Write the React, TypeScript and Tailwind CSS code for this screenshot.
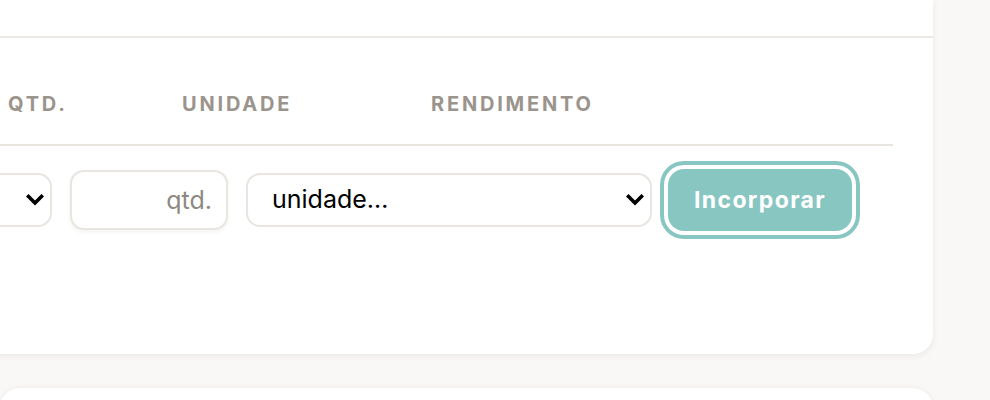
function Chevron() {
  return (
    <svg
      viewBox="0 0 18 12"
      className="pointer-events-none absolute right-[8px] top-1/2 h-[12px] w-[18px] -translate-y-1/2"
      fill="none"
      stroke="black"
      strokeWidth="3.6"
      strokeLinecap="square"
    >
      <path d="M2.5 2.5 9 9l6.5-6.5" />
    </svg>
  );
}

export default function App() {
  return (
    <div className="h-[400px] w-[990px] overflow-hidden bg-[#f9f8f6] pr-[57px] font-['Inter','Liberation_Sans',sans-serif]">
      <div className="-ml-[300px] rounded-b-[20px] bg-white shadow-[0_2px_6px_rgba(60,50,40,0.08)]">
        <div className="h-[38px] border-b-2 border-[#ebe7e2]" />
        <div className="pl-[40px] pr-[40px] pt-[52px] pb-[123px]">
          <div className="flex h-[56px] items-start border-b-2 border-[#e8e5e1] text-[20px] font-bold uppercase leading-[28px] tracking-[0.14em] text-[#9a948d]">
            <div className="w-[268px]" />
            <div className="w-[174px]">Qtd.</div>
            <div className="w-[249px]">Unidade</div>
            <div>Rendimento</div>
          </div>
          <div className="flex items-center pt-[23px]">
            <div className="relative">
              <select className="h-[54px] w-[312px] appearance-none rounded-[14px] border-2 border-[#e9e5e0] bg-white pl-5 pr-10 text-[25px] text-black">
                <option value=""></option>
              </select>
              <Chevron />
            </div>
            <input
              type="text"
              placeholder="qtd."
              className="ml-[18px] h-[60px] w-[158px] rounded-[14px] border-2 border-[#e9e5e0] bg-white pr-[14px] text-right text-[25px] shadow-[0_2px_4px_rgba(60,50,40,0.06)] outline-none placeholder:text-[#8d8882]"
            />
            <div className="relative ml-[18px]">
              <select className="h-[54px] w-[406px] appearance-none rounded-[14px] border-2 border-[#e9e5e0] bg-white pl-[24px] pr-10 text-[25px] text-black">
                <option>unidade…</option>
              </select>
              <Chevron />
            </div>
            <button
              type="button"
              className="ml-[16px] h-[62px] w-[184px] rounded-[16px] bg-[#88c6c2] text-[23px] font-bold tracking-[0.06em] text-white ring-4 ring-[#88c6c2] ring-offset-4 ring-offset-white"
            >
              Incorporar
            </button>
          </div>
        </div>
      </div>
      <div className="mt-[34px] h-[40px] rounded-t-[20px] bg-white shadow-[0_0_4px_rgba(60,50,40,0.08)]" />
    </div>
  );
}
